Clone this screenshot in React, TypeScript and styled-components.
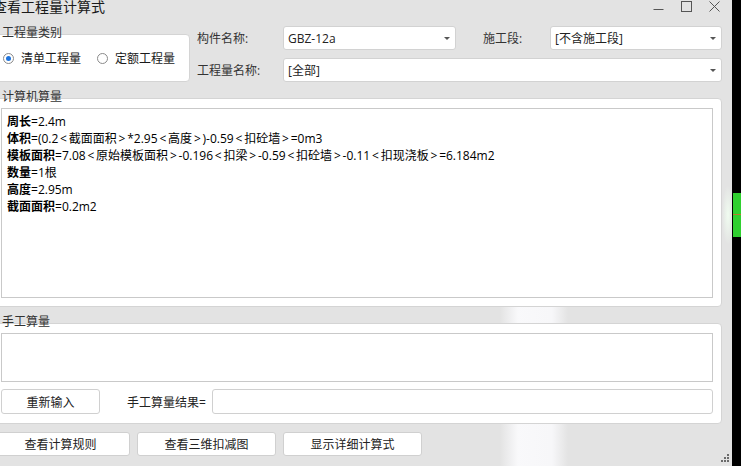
import React from 'react'
import styled, { createGlobalStyle } from 'styled-components'

const GlobalStyle = createGlobalStyle`
    html, body {
        margin: 0;
        padding: 0;
        background: #000;
        overflow: hidden;
    }
    body {
        font-family: "Open Sans", "Noto Sans CJK SC", sans-serif;
    }
    * { box-sizing: border-box; }
`

const Screen = styled.div`
    display: flex;
    width: 741px;
    height: 466px;
    background: #000;
`

const Window = styled.div`
    position: relative;
    width: 732px;
    height: 466px;
    overflow: hidden;
    background:
        radial-gradient(6px 30px at 728px 215px, rgba(240, 252, 240, 1), rgba(227, 227, 227, 0)),
        linear-gradient(to right, rgba(255,255,255,0) 500px, rgba(250,250,252,0.95) 518px, rgba(248,248,250,0.95) 552px, rgba(255,255,255,0) 568px) 0 300px / 100% 166px no-repeat,
        #e3e3e3;
`

const Inner = styled.div`
    margin-left: -9px;
    width: 741px;
    display: flex;
    flex-direction: column;
`

const TitleBar = styled.div`
    height: 26px;
    display: flex;
    justify-content: space-between;
    align-items: flex-start;
`

const Title = styled.div`
    margin-left: 2px;
    font-size: 14px;
    line-height: 14px;
    color: #1a1a1a;
    white-space: nowrap;
`

const Controls = styled.div`
    display: flex;
    margin-right: 4px;
`

const ControlCell = styled.div`
    width: 28px;
    height: 14px;
    display: flex;
    justify-content: center;
    padding-top: 1px;
`

const TopSection = styled.div`
    display: flex;
    align-items: flex-start;
    padding-left: 4px;
`

const Group = styled.div<{ $h: number }>`
    position: relative;
    background: #fff;
    border: 1px solid #d4d4d4;
    border-radius: 4px;
    height: ${p => p.$h}px;
`

const TypeGroup = styled(Group)`
    margin-top: 8px;
    width: 195px;
    flex: none;
    display: flex;
    align-items: center;
    padding-left: 7px;
`

const GroupLabel = styled.div`
    position: absolute;
    top: -9px;
    left: 6px;
    font-size: 12px;
    line-height: 14px;
    color: #333;
    white-space: nowrap;
`

const RadioItem = styled.div`
    display: flex;
    align-items: center;
    flex: none;
    white-space: nowrap;
    font-size: 12px;
    color: #1a1a1a;
    margin-right: 16px;
`

const RadioCircle = styled.span<{ $on?: boolean }>`
    width: 11px;
    height: 11px;
    flex: none;
    border-radius: 50%;
    border: 1px solid #8a8a8a;
    background: #fff;
    margin-right: 7px;
    display: flex;
    align-items: center;
    justify-content: center;
    &::after {
        content: '';
        width: 5px;
        height: 5px;
        border-radius: 50%;
        background: ${p => (p.$on ? '#1f74dd' : 'transparent')};
    }
`

const FormGrid = styled.div`
    margin-left: 7px;
    display: grid;
    grid-template-columns: 86px 173px 27px 67px 172px;
    grid-auto-rows: 24px;
    row-gap: 8px;
`

const FieldLabel = styled.div<{ $col?: number }>`
    grid-column: ${p => p.$col ?? 1};
    display: flex;
    align-items: center;
    font-size: 12px;
    color: #333;
    white-space: nowrap;
`

const Combo = styled.div<{ $span?: string }>`
    grid-column: ${p => p.$span ?? 'auto'};
    display: flex;
    align-items: center;
    justify-content: space-between;
    padding: 0 5px 0 4px;
    background: #fff;
    border: 1px solid #d2d2d2;
    border-radius: 3px;
    font-size: 12px;
    color: #222;
    white-space: nowrap;
`

const Arrow = styled.span`
    width: 0;
    height: 0;
    border-left: 3px solid transparent;
    border-right: 3px solid transparent;
    border-top: 3px solid #555;
`

const ComputerGroup = styled(Group)`
    margin: 16px 0 0 4px;
    width: 727px;
    padding: 9px 8px 8px 5px;
    display: flex;
`

const TextBox = styled.div<{ $h?: number }>`
    flex: 1;
    ${p => (p.$h ? `height: ${p.$h}px; flex: none;` : '')}
    background: #fff;
    border: 1px solid #c9c9c9;
    padding: 4px 5px;
    font-size: 12px;
    line-height: 17px;
    color: #000;
    white-space: nowrap;
`

const B = styled.b`
    font-weight: 700;
`

const Angle = styled.span`
    margin: 0 1.8px;
`

const ManualGroup = styled(Group)`
    margin: 16px 0 0 4px;
    width: 727px;
    padding: 9px 8px 9px 5px;
    display: flex;
    flex-direction: column;
    gap: 7px;
`

const ManualRow = styled.div`
    display: flex;
    align-items: center;
    height: 25px;
`

const Button = styled.div<{ $w: number; $h?: number }>`
    width: ${p => p.$w}px;
    height: ${p => p.$h ?? 24}px;
    flex: none;
    display: flex;
    align-items: center;
    justify-content: center;
    background: #fff;
    border: 1px solid #d0d0d0;
    border-radius: 3px;
    font-size: 12px;
    color: #222;
    white-space: nowrap;
`

const ResultLabel = styled.div`
    margin-left: 27px;
    font-size: 12px;
    color: #222;
    white-space: nowrap;
`

const ResultInput = styled.div`
    margin-left: 6px;
    flex: 1;
    height: 25px;
    background: #fff;
    border: 1px solid #d0d0d0;
    border-radius: 3px;
`

const BottomBar = styled.div`
    margin-top: 8px;
    display: flex;
    gap: 7px;
`

const Grip = styled.svg`
    position: absolute;
    right: 2px;
    bottom: 3px;
`

const Desktop = styled.div`
    flex: 1;
    display: flex;
    flex-direction: column;
    padding-top: 193px;
    padding-left: 1px;
`

const GreenBar = styled.div`
    height: 44px;
    background: linear-gradient(#2fd02f 0 21px, #b87a2a 21px 22px, #2fd02f 22px);
`

const lines: [string, string][] = [
    ['周长', '=2.4m'],
    ['体积', '=(0.2<截面面积>*2.95<高度>)-0.59<扣砼墙>=0m3'],
    ['模板面积', '=7.08<原始模板面积>-0.196<扣梁>-0.59<扣砼墙>-0.11<扣现浇板>=6.184m2'],
    ['数量', '=1根'],
    ['高度', '=2.95m'],
    ['截面面积', '=0.2m2'],
]

// angle brackets get a little air, like the original font
const formula = (s: string) =>
    s.split(/([<>])/).map((part, i) =>
        part === '<' || part === '>' ? <Angle key={i}>{part}</Angle> : part
    )

const App = () => {
    return (
        <>
            <GlobalStyle />
            <Screen>
                <Window>
                    <Inner>
                        <TitleBar>
                            <Title>查看工程量计算式</Title>
                            <Controls>
                                <ControlCell>
                                    <svg width="11" height="11" viewBox="0 0 11 11">
                                        <line x1="0.5" y1="8.5" x2="10.5" y2="8.5" stroke="#555" strokeWidth="1" />
                                    </svg>
                                </ControlCell>
                                <ControlCell>
                                    <svg width="11" height="11" viewBox="0 0 11 11">
                                        <rect x="0.5" y="0.5" width="10" height="10" fill="none" stroke="#555" strokeWidth="1" />
                                    </svg>
                                </ControlCell>
                                <ControlCell>
                                    <svg width="11" height="11" viewBox="0 0 11 11">
                                        <path d="M0.5 0.5 L10.5 10.5 M10.5 0.5 L0.5 10.5" stroke="#555" strokeWidth="1" />
                                    </svg>
                                </ControlCell>
                            </Controls>
                        </TitleBar>

                        <TopSection>
                            <TypeGroup $h={48}>
                                <GroupLabel>工程量类别</GroupLabel>
                                <RadioItem>
                                    <RadioCircle $on />
                                    清单工程量
                                </RadioItem>
                                <RadioItem>
                                    <RadioCircle />
                                    定额工程量
                                </RadioItem>
                            </TypeGroup>
                            <FormGrid>
                                <FieldLabel>构件名称:</FieldLabel>
                                <Combo>GBZ-12a<Arrow /></Combo>
                                <FieldLabel $col={4}>施工段:</FieldLabel>
                                <Combo>[不含施工段]<Arrow /></Combo>
                                <FieldLabel>工程量名称:</FieldLabel>
                                <Combo $span="2 / 6">[全部]<Arrow /></Combo>
                            </FormGrid>
                        </TopSection>

                        <ComputerGroup $h={209}>
                            <GroupLabel>计算机算量</GroupLabel>
                            <TextBox>
                                {lines.map(([k, v]) => (
                                    <div key={k}><B>{k}</B>{formula(v)}</div>
                                ))}
                            </TextBox>
                        </ComputerGroup>

                        <ManualGroup $h={101}>
                            <GroupLabel>手工算量</GroupLabel>
                            <TextBox $h={49} />
                            <ManualRow>
                                <Button $w={99} $h={25}>重新输入</Button>
                                <ResultLabel>手工算量结果=</ResultLabel>
                                <ResultInput />
                            </ManualRow>
                        </ManualGroup>

                        <BottomBar>
                            <Button $w={139}>查看计算规则</Button>
                            <Button $w={139}>查看三维扣减图</Button>
                            <Button $w={139}>显示详细计算式</Button>
                        </BottomBar>
                    </Inner>
                    <Grip width="9" height="9" viewBox="0 0 9 9">
                        <g fill="#6b6b6b">
                            <rect x="6" y="0" width="2" height="2" />
                            <rect x="3" y="3" width="2" height="2" />
                            <rect x="6" y="3" width="2" height="2" />
                            <rect x="0" y="6" width="2" height="2" />
                            <rect x="3" y="6" width="2" height="2" />
                            <rect x="6" y="6" width="2" height="2" />
                        </g>
                    </Grip>
                </Window>
                <Desktop>
                    <GreenBar />
                </Desktop>
            </Screen>
        </>
    )
}

export default App
